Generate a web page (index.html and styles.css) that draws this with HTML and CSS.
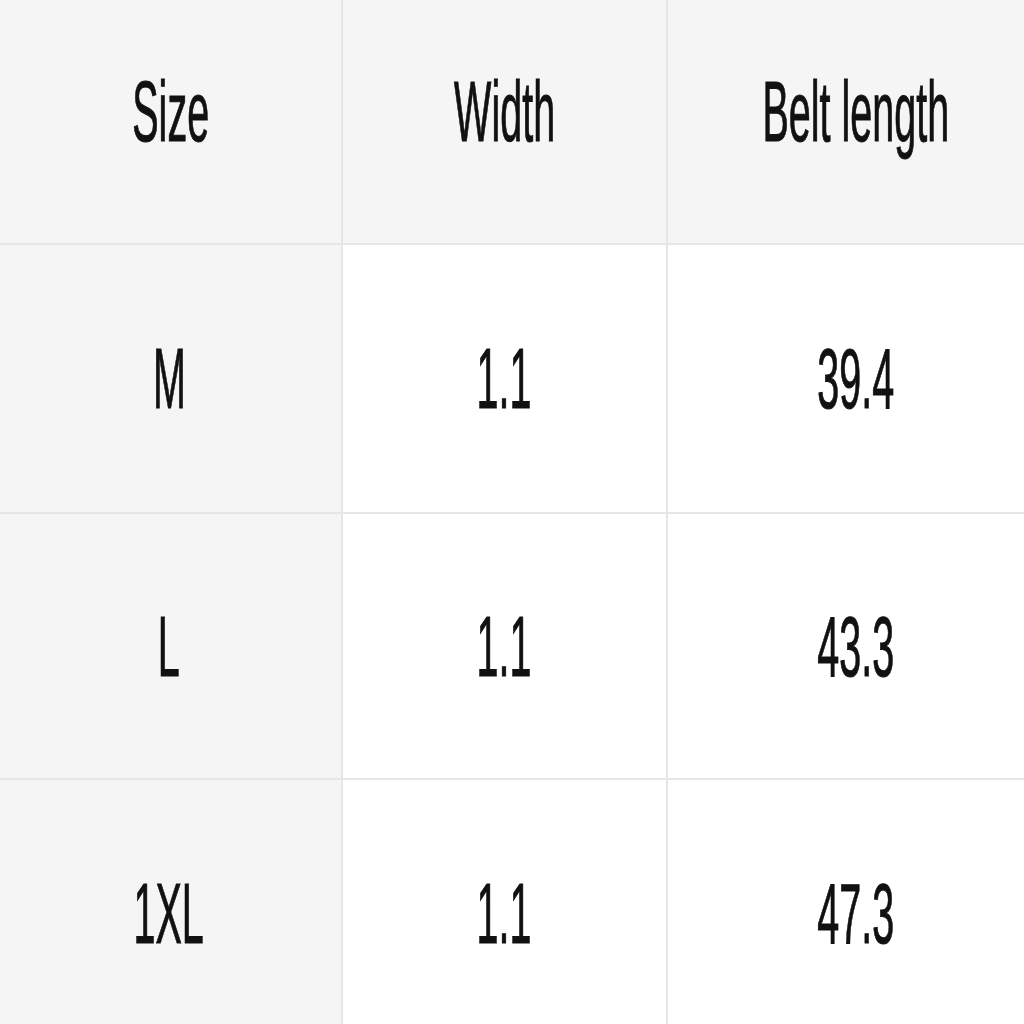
FILE: index.html
```html
<!DOCTYPE html>
<html>
<head>
<meta charset="utf-8">
<link rel="stylesheet" href="styles.css">
</head>
<body>
<div class="table">
  <div class="cell head"><span class="txt">Size</span></div>
  <div class="cell head"><span class="txt">Width</span></div>
  <div class="cell head"><span class="txt">Belt length</span></div>

  <div class="cell side"><span class="txt">M</span></div>
  <div class="cell"><span class="txt">1.1</span></div>
  <div class="cell"><span class="txt">39.4</span></div>

  <div class="cell side"><span class="txt">L</span></div>
  <div class="cell"><span class="txt">1.1</span></div>
  <div class="cell"><span class="txt">43.3</span></div>

  <div class="cell side"><span class="txt">1XL</span></div>
  <div class="cell"><span class="txt">1.1</span></div>
  <div class="cell"><span class="txt">47.3</span></div>
</div>
</body>
</html>
```

FILE: styles.css
```css
html, body {
  margin: 0;
  padding: 0;
  overflow: hidden;
  background: #ffffff;
}
.table {
  display: grid;
  grid-template-columns: 341px 323px 376px;
  grid-template-rows: 243px 267px 264px 266px;
  gap: 2px;
  background: #e6e6e6;
  width: 1044px;
  font-family: "Liberation Sans", Arial, sans-serif;
  color: #111111;
}
.cell {
  background: #ffffff;
  display: flex;
  align-items: center;
  justify-content: center;
}
.head, .side {
  background: #f5f5f5;
}
.head {
  padding-bottom: 20px;
}
.side {
  padding-right: 3px;
}
.txt {
  display: inline-block;
  font-size: 85px;
  line-height: 1;
  transform: scaleX(0.465);
  white-space: nowrap;
  -webkit-text-stroke: 1px #111111;
}
```
